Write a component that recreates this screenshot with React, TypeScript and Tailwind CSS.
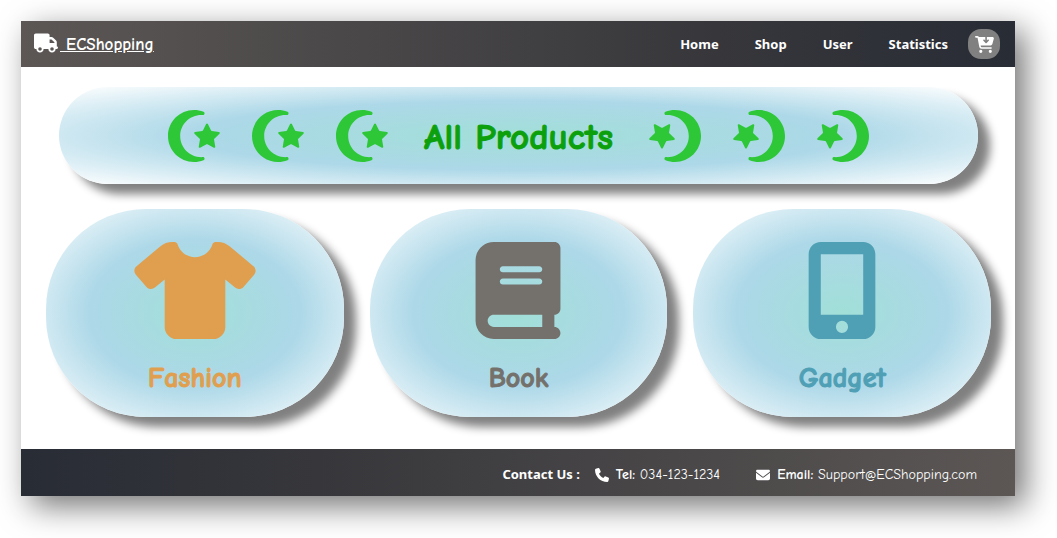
import type { IconType } from "react-icons";
import {
  FaBook,
  FaCartArrowDown,
  FaEnvelope,
  FaMobileScreenButton,
  FaPhone,
  FaShirt,
  FaStarAndCrescent,
  FaTruck,
} from "react-icons/fa6";

const links = ["Home", "Shop", "User", "Statistics"];

const categories: { name: string; icon: IconType; color: string }[] = [
  { name: "Fashion", icon: FaShirt, color: "text-[#e09f4f]" },
  { name: "Book", icon: FaBook, color: "text-[#74716c]" },
  { name: "Gadget", icon: FaMobileScreenButton, color: "text-[#4f9fb5]" },
];

function Moons({ flipped = false }: { flipped?: boolean }) {
  return (
    <div className="flex gap-8 text-[52px] text-[#2dc737]">
      {[0, 1, 2].map((i) => (
        <FaStarAndCrescent key={i} className={flipped ? "rotate-180" : ""} />
      ))}
    </div>
  );
}

export default function App() {
  return (
    <div className="overflow-hidden bg-white pt-[21px] pr-[42px] pb-[42px] pl-[21px] font-['Comic_Sans_MS','Comic_Neue','Open_Sans',sans-serif]">
      <div className="bg-white shadow-[10px_10px_30px_rgba(0,0,0,0.55)]">
        <header className="flex h-[46px] items-center justify-between bg-linear-to-r from-[#5c5755] via-[#37373b] via-70% to-[#282c35] pr-[15px] pl-[13px] text-white">
          <a href="#home" className="flex items-start gap-0.5">
            <FaTruck className="text-[24px]" />
            <span className="pt-0.5 text-[17px] leading-6 font-bold whitespace-pre underline">{" ECShopping"}</span>
          </a>
          <nav className="flex items-center font-['Noto_Sans',sans-serif] text-[13px] font-bold">
            <div className="flex gap-9 pt-0.5">
              {links.map((l) => (
                <a key={l} href={"#" + l.toLowerCase()}>{l}</a>
              ))}
            </div>
            <button aria-label="Cart" className="ml-5 flex h-[30px] w-8 items-center justify-center rounded-[13px] bg-[#808080] text-[19px]">
              <FaCartArrowDown />
            </button>
          </nav>
        </header>

        <main className="pt-5 pr-6 pb-8 pl-[25px]">
          <section className="mr-[13px] ml-[13px] flex h-[97px] items-center justify-center gap-9 rounded-[50px] bg-[radial-gradient(#a1dfd8,#add8e8_50%,#ffffff)] shadow-[12px_10px_10px_#808080]">
            <Moons />
            <h1 className="pt-0.5 text-[37px] leading-10 font-bold text-[#0ca00c] [-webkit-text-stroke:1px]">All Products</h1>
            <Moons flipped />
          </section>
          <section className="mt-[25px] grid grid-cols-3 gap-[26px]">
            {categories.map(({ name, icon: Icon, color }) => (
              <a
                key={name}
                href={"#" + name.toLowerCase()}
                className={"flex h-[208px] flex-col items-center rounded-[100px] bg-[radial-gradient(#a1dfd8,#add8e8_50%,#ffffff)] pt-[33px] shadow-[12px_10px_10px_#808080] " + color}
              >
                <Icon className="h-[97px] w-[122px]" />
                <h2 className="mt-[21px] text-[28px] leading-9 font-bold [-webkit-text-stroke:1px]">{name}</h2>
              </a>
            ))}
          </section>
        </main>

        <footer className="flex h-[47px] items-center justify-end bg-linear-to-r from-[#282c35] via-[#37373b] via-30% to-[#5c5755] pt-1 pr-[38px] text-[14px] text-white">
          <strong className="font-['Noto_Sans',sans-serif] text-[13px]">Contact Us :</strong>
          <FaPhone className="mr-[7px] ml-[15px]" />
          <p><b>Tel:</b> 034-123-1234</p>
          <FaEnvelope className="mr-[7px] ml-9" />
          <p><b>Email:</b> Support@ECShopping.com</p>
        </footer>
      </div>
    </div>
  );
}
